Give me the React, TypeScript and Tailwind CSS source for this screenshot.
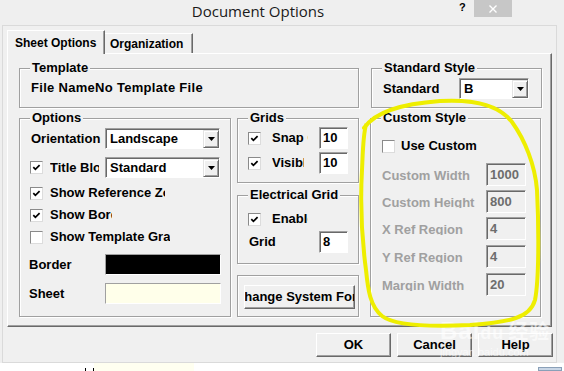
import React from "react";

function Check({ on }: { on?: boolean }) {
  return (
    <span className="w-[13px] h-[13px] shrink-0 bg-white border border-t-[#8a8a8a] border-l-[#8a8a8a] border-r-[#dcdcdc] border-b-[#dcdcdc] flex items-center justify-center">
      {on && (
        <svg width="9" height="9" viewBox="0 0 9 9">
          <path d="M1.3 4.2 L3.4 6.4 L7.6 2.1" fill="none" stroke="#000" strokeWidth="1.7" />
        </svg>
      )}
    </span>
  );
}

function Edit({ v, className, off }: { v: string; className: string; off?: boolean }) {
  return (
    <div
      className={`${className} ${off ? "bg-[#f0f0f0] text-[#6d6d6d]" : "bg-white text-black"} shrink-0 border border-t-[#a0a0a0] border-l-[#a0a0a0] border-r-white border-b-white shadow-[inset_1px_1px_0_#696969] flex items-center pl-[3px] leading-[16px]`}
    >
      {v}
    </div>
  );
}

function Combo({ v, className }: { v: string; className: string }) {
  return (
    <div className={`${className} shrink-0 bg-white border border-t-[#a0a0a0] border-l-[#a0a0a0] border-r-white border-b-white shadow-[inset_1px_1px_0_#696969] flex items-stretch pl-[1px] pt-[1px]`}>
      <div className="flex-1 flex items-center pl-[3px] leading-[16px]">{v}</div>
      <div className="w-[16px] bg-[#f0f0f0] border border-t-[#e3e3e3] border-l-[#e3e3e3] border-r-[#696969] border-b-[#696969] shadow-[inset_1px_1px_0_#fff,inset_-1px_-1px_0_#a0a0a0] flex items-center justify-center">
        <svg width="7" height="4" viewBox="0 0 7 4">
          <polygon points="0,0 7,0 3.5,4" fill="#000" />
        </svg>
      </div>
    </div>
  );
}

function Group({ label, className, children }: { label?: string; className: string; children?: React.ReactNode }) {
  return (
    <div className={`relative border border-[#a0a0a0] shadow-[inset_1px_1px_0_#fff,1px_1px_0_#fff] ${className}`}>
      {label && (
        <span className="absolute -top-[9px] left-[10px] px-[2px] bg-[#f0f0f0] leading-[16px] whitespace-nowrap">{label}</span>
      )}
      {children}
    </div>
  );
}

function Btn({ t, className }: { t: string; className: string }) {
  return (
    <div className={`${className} bg-[#f0f0f0] border border-t-white border-l-white border-r-[#696969] border-b-[#696969] shadow-[inset_-1px_-1px_0_#a0a0a0] flex items-center justify-center overflow-hidden whitespace-nowrap`}>
      {t}
    </div>
  );
}

const dimRows = [
  { l: "Custom Width", v: "1000", mt: "mt-[9px]" },
  { l: "Custom Height", v: "800", mt: "mt-[4px]" },
  { l: "X Ref Region", v: "4", mt: "mt-[4px]" },
  { l: "Y Ref Region", v: "4", mt: "mt-[5px]" },
  { l: "Margin Width", v: "20", mt: "mt-[5px]" },
];

export default function App() {
  return (
    <div className="w-[564px] h-[371px] bg-white relative overflow-hidden font-['Liberation_Sans',Arial,sans-serif] text-[13px] font-bold text-black">
      <div className="h-[363px] bg-[#efefef] flex flex-col">
        {/* title bar */}
        <div className="h-[25px] shrink-0 flex items-start">
          <div className="w-[459px] pl-[57px] text-center pt-[1px] font-['Open_Sans',sans-serif] font-normal text-[15px] leading-[20px] text-[#1a1a1a]">
            Document Options
          </div>
          <div className="w-[7px] pt-[1px] text-[11px] leading-[12px] font-bold">?</div>
          <div className="ml-[8px] w-[38px] h-[17px] bg-[#c7c7c7] flex items-center justify-center">
            <svg width="8" height="8" viewBox="0 0 8 8">
              <path d="M0.5 0.5 L7.5 7.5 M7.5 0.5 L0.5 7.5" stroke="#fff" strokeWidth="1.4" />
            </svg>
          </div>
        </div>

        {/* client area */}
        <div className="ml-[2px] w-[555px] h-[338px] border border-[#dadada] bg-[#f0f0f0] flex flex-col">
          <div className="h-[27px] flex items-end pl-[4px] text-[12px]">
            <div className="relative z-10 w-[98px] h-[24px] -mb-[1px] bg-[#f0f0f0] border-t border-l border-r border-t-white border-l-white border-r-[#696969] shadow-[inset_-1px_0_0_#a0a0a0] flex items-center pl-[7px]">
              Sheet Options
            </div>
            <div className="w-[88px] h-[20px] border-t border-r border-t-white border-r-[#696969] shadow-[inset_-1px_0_0_#a0a0a0] flex items-center pl-[5px]">
              Organization
            </div>
          </div>

          <div className="ml-[4px] w-[545px] h-[274px] border border-t-white border-l-white border-r-[#696969] border-b-[#696969] shadow-[inset_-1px_-1px_0_#a0a0a0] pt-[14px] pl-[11px]">
            <div className="flex gap-[12px]">
              <Group label="Template" className="w-[340px] h-[40px] pl-[11px] pt-[11px]">
                <div className="leading-[16px] tracking-[0.3px]">File NameNo Template File</div>
              </Group>
              <Group label="Standard Style" className="w-[171px] h-[40px] pl-[11px] pt-[9px]">
                <div className="flex items-center h-[21px]">
                  <span className="w-[76px]">Standard</span>
                  <Combo v="B" className="w-[70px] h-[21px]" />
                </div>
              </Group>
            </div>

            <div className="flex mt-[10px]">
              <Group label="Options" className="w-[212px] h-[199px] pl-[11px] flex flex-col">
                <div className="mt-[9px] h-[21px] flex items-center">
                  <span className="w-[74px]">Orientation</span>
                  <Combo v="Landscape" className="w-[115px] h-[21px]" />
                </div>
                <div className="mt-[8px] h-[21px] flex items-center -ml-[1px]">
                  <Check on />
                  <span className="ml-[7px] w-[49px] overflow-hidden whitespace-nowrap">Title Block</span>
                  <Combo v="Standard" className="ml-[6px] w-[115px] h-[21px]" />
                </div>
                <div className="mt-[7px] h-[16px] flex items-center -ml-[1px]">
                  <Check on />
                  <span className="ml-[7px] w-[115px] overflow-hidden whitespace-nowrap">Show Reference Zones</span>
                </div>
                <div className="mt-[6px] h-[16px] flex items-center -ml-[1px]">
                  <Check on />
                  <span className="ml-[7px] w-[62px] overflow-hidden whitespace-nowrap">Show Border</span>
                </div>
                <div className="mt-[6px] h-[16px] flex items-center -ml-[1px]">
                  <Check />
                  <span className="ml-[7px] w-[120px] overflow-hidden whitespace-nowrap">Show Template Graphics</span>
                </div>
                <div className="mt-[9px] h-[21px] flex items-center -ml-[2px]">
                  <span className="w-[76px]">Border</span>
                  <div className="w-[116px] h-[21px] bg-black border border-t-[#a0a0a0] border-l-[#a0a0a0] border-r-white border-b-white" />
                </div>
                <div className="mt-[8px] h-[21px] flex items-center -ml-[2px]">
                  <span className="w-[76px]">Sheet</span>
                  <div className="w-[116px] h-[21px] bg-[#ffffea] border border-t-[#a0a0a0] border-l-[#a0a0a0] border-r-white border-b-white" />
                </div>
              </Group>

              <div className="ml-[6px] w-[122px] flex flex-col">
                <Group label="Grids" className="h-[65px] pl-[10px] flex flex-col">
                  <div className="mt-[8px] h-[22px] flex items-center">
                    <Check on />
                    <span className="ml-[11px] w-[36px] overflow-hidden whitespace-nowrap">Snap On</span>
                    <Edit v="10" className="ml-[11px] w-[29px] h-[22px]" />
                  </div>
                  <div className="mt-[3px] h-[22px] flex items-center">
                    <Check on />
                    <span className="ml-[11px] w-[32px] overflow-hidden whitespace-nowrap">Visible</span>
                    <Edit v="10" className="ml-[15px] w-[29px] h-[22px]" />
                  </div>
                </Group>
                <Group label="Electrical Grid" className="mt-[12px] h-[69px] pl-[10px] flex flex-col">
                  <div className="mt-[15px] h-[16px] flex items-center">
                    <Check on />
                    <span className="ml-[11px] w-[36px] overflow-hidden whitespace-nowrap">Enable</span>
                  </div>
                  <div className="mt-[4px] h-[22px] flex items-center">
                    <span className="ml-[1px] w-[70px]">Grid</span>
                    <Edit v="8" className="w-[29px] h-[22px]" />
                  </div>
                </Group>
                <Group className="mt-[11px] h-[42px] pl-[6px] pt-[9px]">
                  <Btn t="Change System Font" className="w-[111px] h-[24px]" />
                </Group>
              </div>

              <Group label="Custom Style" className="ml-[11px] w-[171px] h-[199px] pl-[11px] flex flex-col">
                <div className="mt-[19px] h-[16px] flex items-center">
                  <Check />
                  <span className="ml-[6px]">Use Custom</span>
                </div>
                {dimRows.map((r) => (
                  <div key={r.l} className={`${r.mt} h-[23px] flex items-center`}>
                    <span className="w-[104px] h-[13px] leading-[16px] overflow-hidden whitespace-nowrap text-[#a0a0a0]">{r.l}</span>
                    <Edit v={r.v} off className="w-[40px] h-[23px]" />
                  </div>
                ))}
              </Group>
            </div>
          </div>

          <div className="flex justify-end gap-[6px] mt-[6px] pr-[3px]">
            <Btn t="OK" className="w-[75px] h-[24px]" />
            <Btn t="Cancel" className="w-[75px] h-[24px]" />
            <Btn t="Help" className="w-[75px] h-[24px]" />
          </div>
        </div>
      </div>

      {/* strip below the window */}
      <div className="flex h-[8px] items-end">
        <div className="ml-[85px] w-[1px] h-[3px] bg-black" />
        <div className="ml-[7px] w-[1px] h-[3px] bg-black" />
        <div className="w-[100px] h-[8px] bg-[#fffff0]" />
        <div className="ml-auto mr-[2px] w-[24px] h-[4px] bg-[#c9d6e6] border border-[#8aa0b8]" />
      </div>

      {/* watermark */}
      <div className="absolute left-[440px] top-[318px] pointer-events-none text-white opacity-60">
        <div className="font-['Liberation_Sans',sans-serif] font-bold text-[24px] leading-[26px] tracking-[1px]">
          Bai<span className="text-[18px]">du</span>
          <span className="ml-[4px] text-[20px] font-['Noto_Sans_CJK_SC',sans-serif]">经验</span>
        </div>
        <div className="text-[11px] leading-[12px] font-normal">jingyan.baidu.com</div>
      </div>

      {/* hand-drawn highlight */}
      <svg className="absolute left-0 top-0 pointer-events-none" width="564" height="371" viewBox="0 0 564 371">
        <path
          d="M364 128 C375 112 400 104 440 101 C475 99 500 106 512 122 C525 140 535 165 537 190 C539 230 539 280 535 300 C530 318 510 322 470 325 C430 327 395 326 382 316 C370 306 368 290 366 270 C362 240 360 205 362 170 C363 150 363 135 366 125"
          fill="none"
          stroke="#eeee00"
          strokeWidth="4"
          strokeLinecap="round"
        />
      </svg>
    </div>
  );
}
